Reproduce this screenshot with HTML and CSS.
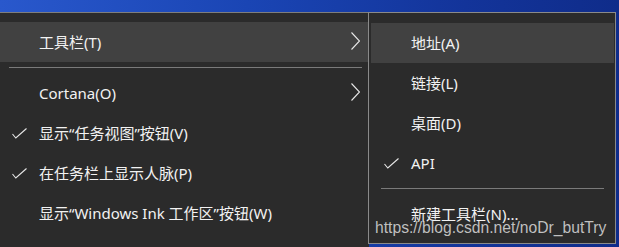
FILE: index.html
```html
<!DOCTYPE html>
<html lang="zh">
<head>
<meta charset="utf-8">
<link rel="stylesheet" href="styles.css">
</head>
<body>
<div class="desk">
  <div class="menu">
    <div class="item hover">
      <span class="icon"></span><span class="label">工具栏(T)</span>
      <svg class="chev" width="9" height="18" viewBox="0 0 9 18"><polyline points="0.5,0.5 8.5,9 0.5,17.5" fill="none" stroke="#e8e8e8" stroke-width="1.1"/></svg>
    </div>
    <div class="sep"></div>
    <div class="item">
      <span class="icon"></span><span class="label">Cortana(O)</span>
      <svg class="chev" width="9" height="18" viewBox="0 0 9 18"><polyline points="0.5,0.5 8.5,9 0.5,17.5" fill="none" stroke="#e8e8e8" stroke-width="1.1"/></svg>
    </div>
    <div class="item">
      <span class="icon"><svg width="15" height="11" viewBox="0 0 15 11"><polyline points="0.5,6 3.8,10 14.5,0.5" fill="none" stroke="#e8e8e8" stroke-width="1.1"/></svg></span><span class="label">显示“任务视图”按钮(V)</span>
    </div>
    <div class="item">
      <span class="icon"><svg width="15" height="11" viewBox="0 0 15 11"><polyline points="0.5,6 3.8,10 14.5,0.5" fill="none" stroke="#e8e8e8" stroke-width="1.1"/></svg></span><span class="label">在任务栏上显示人脉(P)</span>
    </div>
    <div class="item">
      <span class="icon"></span><span class="label">显示“Windows Ink 工作区”按钮(W)</span>
    </div>
  </div>

  <div class="submenu">
    <div class="item hover"><span class="icon"></span><span class="label">地址(A)</span></div>
    <div class="item"><span class="icon"></span><span class="label">链接(L)</span></div>
    <div class="item"><span class="icon"></span><span class="label">桌面(D)</span></div>
    <div class="item"><span class="icon"><svg width="15" height="11" viewBox="0 0 15 11"><polyline points="0.5,6 3.8,10 14.5,0.5" fill="none" stroke="#e8e8e8" stroke-width="1.1"/></svg></span><span class="label">API</span></div>
    <div class="sep"></div>
    <div class="item"><span class="icon"></span><span class="label">新建工具栏(N)...</span></div>
  </div>

  <div class="watermark">https://blog.csdn.net/noDr_butTry</div>
</div>
</body>
</html>
```

FILE: styles.css
```css
html, body {
  margin: 0;
  padding: 0;
}
body {
  width: 619px;
  height: 247px;
  overflow: hidden;
  font-family: "Noto Sans", "Noto Sans CJK SC", sans-serif;
  font-size: 15px;
  color: #f2f2f2;
}
.desk {
  position: relative;
  width: 619px;
  height: 247px;
  background: linear-gradient(90deg, #2958cc 0%, #1a45b4 40%, #13349a 75%, #0f2c8a 100%);
  padding-top: 12px;
  box-sizing: border-box;
}
.menu {
  width: 369px;
  height: 235px;
  box-sizing: border-box;
  background: #2b2b2b;
  border-top: 1px solid #7e7e7e;
  padding-top: 9px;
}
.item {
  display: flex;
  align-items: center;
  height: 40px;
  box-sizing: border-box;
  padding-left: 12px;
  padding-right: 9px;
}
.item.hover {
  background: #414141;
}
.icon {
  width: 27px;
  flex: none;
  display: flex;
  align-items: center;
  padding-top: 1px;
}
.label {
  flex: 1;
  white-space: nowrap;
  line-height: 20px;
}
.chev {
  display: block;
  margin-top: -2px;
}
.sep {
  height: 1px;
  background: #7a7a7a;
  margin: 5px 7px 5px 9px;
}
.submenu {
  position: absolute;
  left: 368px;
  top: 12px;
  width: 248px;
  height: 232px;
  box-sizing: border-box;
  background: #2b2b2b;
  border: 1px solid #8a8a8a;
  padding: 10px 1px 0 2px;
}
.submenu .item {
  padding-left: 13px;
}
.submenu .sep {
  margin: 5px 10px 5px 10px;
}
.watermark {
  position: absolute;
  left: 375px;
  top: 218px;
  font-family: "Liberation Sans", Arial, sans-serif;
  font-size: 15.7px;
  line-height: 20px;
  color: rgba(220, 220, 220, 0.85);
  white-space: nowrap;
}
```
